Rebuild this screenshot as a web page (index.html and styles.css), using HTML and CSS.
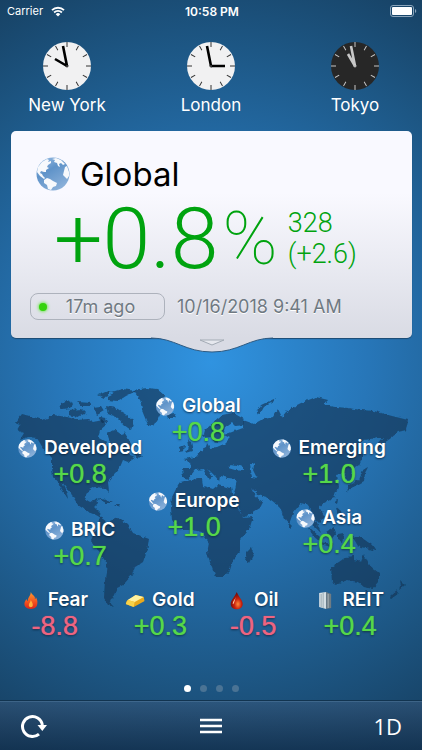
FILE: index.html
```html
<!DOCTYPE html>
<html lang="en">

<head>
    <meta charset="UTF-8">
    <meta name="viewport" content="width=device-width, initial-scale=1.0">
    <title>Global Markets</title>
    <link rel="stylesheet" href="styles.css">
</head>

<body>
    <!-- shared symbols -->
    <svg class="defs" width="0" height="0" aria-hidden="true">
        <defs>
            <linearGradient id="sea" x1="0" y1="0" x2="0.6" y2="1">
                <stop offset="0" stop-color="#a3c4e8" />
                <stop offset="0.45" stop-color="#5f93c9" />
                <stop offset="1" stop-color="#8ab0d9" />
            </linearGradient>
            <linearGradient id="flame" x1="0" y1="0" x2="0" y2="1">
                <stop offset="0" stop-color="#ff9a2e" />
                <stop offset="0.6" stop-color="#f4511e" />
                <stop offset="1" stop-color="#d9261c" />
            </linearGradient>
            <radialGradient id="oil" cx="0.6" cy="0.7" r="0.6">
                <stop offset="0" stop-color="#ff8a3a" />
                <stop offset="0.5" stop-color="#c9220f" />
                <stop offset="1" stop-color="#7c0d08" />
            </radialGradient>
        </defs>
        <symbol id="globe" viewBox="0 0 34 34">
            <circle cx="17" cy="17" r="16.5" fill="url(#sea)" />
            <path fill="#f7f9fc" d="M1 15 2 10 6 5 11 2 13 3 12 5 15 4 15 6 12 8 11 10 13 11 10 13 10 15 8 15 5 14 4 16 6 17 7 19 9 21 8 22 4 19Z" />
            <path fill="#f7f9fc" d="M8 23 11 21 14 22 17 24 21 26 20 29 17 30 15 33 12 32 11 28 8 26Z" />
            <path fill="#f7f9fc" d="M16 2 20 1 25 3 29 7 27 8 25 6 23 7 24 10 22 9 21 6 18 5 19 3Z" />
            <path fill="#f7f9fc" d="M29 10 31 9 33 15 33 19 31 22 29 20 27 18 28 14Z" />
        </symbol>
    </svg>

    <header class="status">
        <span class="carrier">Carrier
            <svg class="wifi" viewBox="0 0 14 11" aria-hidden="true">
                <path d="M1 4.2a8.6 8.6 0 0 1 12 0M3.1 6.5a5.6 5.6 0 0 1 7.8 0" fill="none" stroke="#fff" stroke-width="1.8" />
                <path d="M7 10.6 4.7 8.2a3.3 3.3 0 0 1 4.6 0Z" fill="#fff" />
            </svg>
        </span>
        <span class="time">10:58 PM</span>
        <svg class="battery" viewBox="0 0 27 12" aria-hidden="true">
            <rect x="0.5" y="0.5" width="23" height="11" rx="2.5" fill="none" stroke="#8ba5bb" />
            <rect x="2" y="2" width="20" height="8" rx="1" fill="#fff" />
            <path d="M25 4a2.2 2.2 0 0 1 0 4Z" fill="#8ba5bb" />
        </svg>
    </header>

    <section class="clocks">
        <div class="city">
            <svg class="clock" viewBox="-24 -24 48 48" aria-hidden="true">
                <circle r="24" fill="#f1f1f2" />
                <g class="ticks">
                    <path d="M0-24V-19M0 24V19M-24 0H-19M24 0H19" />
                    <path d="M0-24V-19M0 24V19M-24 0H-19M24 0H19" transform="rotate(30) scale(0.96)" />
                    <path d="M0-24V-19M0 24V19M-24 0H-19M24 0H19" transform="rotate(60) scale(0.96)" />
                </g>
                <path class="hands" d="M0 0-12-7M0 0-4-20" />
                <circle r="1" fill="#fff" stroke="#000" />
            </svg>
            <span>New York</span>
        </div>
        <div class="city">
            <svg class="clock" viewBox="-24 -24 48 48" aria-hidden="true">
                <circle r="24" fill="#f1f1f2" />
                <g class="ticks">
                    <path d="M0-24V-19M0 24V19M-24 0H-19M24 0H19" />
                    <path d="M0-24V-19M0 24V19M-24 0H-19M24 0H19" transform="rotate(30) scale(0.96)" />
                    <path d="M0-24V-19M0 24V19M-24 0H-19M24 0H19" transform="rotate(60) scale(0.96)" />
                </g>
                <path class="hands" d="M0 0H14M0 0-4-20" />
                <circle r="1" fill="#fff" stroke="#000" />
            </svg>
            <span>London</span>
        </div>
        <div class="city night">
            <svg class="clock" viewBox="-24 -24 48 48" aria-hidden="true">
                <circle r="24" fill="#272727" />
                <g class="ticks">
                    <path d="M0-24V-19M0 24V19M-24 0H-19M24 0H19" />
                    <path d="M0-24V-19M0 24V19M-24 0H-19M24 0H19" transform="rotate(30) scale(0.96)" />
                    <path d="M0-24V-19M0 24V19M-24 0H-19M24 0H19" transform="rotate(60) scale(0.96)" />
                </g>
                <path class="hands" d="M0 0-7-12M0 0-4-20" />
                <circle r="1" fill="#555" stroke="#ddd" />
            </svg>
            <span>Tokyo</span>
        </div>
    </section>

    <main>
        <section class="card">
            <h1><svg class="globe-big" aria-hidden="true"><use href="#globe" /></svg>Global</h1>
            <div class="quote">
                <span class="change">+0.8</span>
                <span class="percent">%</span>
                <span class="detail"><span>328</span><span>(+2.6)</span></span>
            </div>
            <div class="updated">
                <button type="button" class="ago"><i class="dot"></i><span>17m ago</span></button>
                <time datetime="2018-10-16T09:41">10/16/2018 9:41 AM</time>
            </div>
            <svg class="tab" viewBox="0 0 122 16" aria-hidden="true">
                <path d="M0 0V1C24 1 34 15 61 15S98 1 122 1V0Z" fill="#d9dbe4" />
                <path d="M0 1C24 1 34 15 61 15S98 1 122 1" fill="none" stroke="#2d5a82" />
                <path d="M49 3H73L61 8Z" fill="#e6e8ee" stroke="#a3abb5" />
            </svg>
        </section>

        <section class="map">
            <svg class="world" viewBox="0 352 422 270" aria-hidden="true">
                <filter id="coast" x="-5%" y="-5%" width="110%" height="110%">
                    <feTurbulence type="fractalNoise" baseFrequency="0.22" numOctaves="2" seed="4" />
                    <feDisplacementMap in="SourceGraphic" scale="4" xChannelSelector="R" yChannelSelector="G" />
                </filter>
                <g filter="url(#coast)" fill="#103050" fill-opacity="0.62" fill-rule="evenodd">
                    <!-- north america -->
                    <path d="M15 423 22 414 33 417 43 420 53 415 67 417 78 420 88 419 93 422 103 420 106 425 100 430 98 437 105 441 107 447 110 442 107 433 115 430 122 435 124 432 128 438 133 448 125 453 135 457 128 462 123 460 120 467 115 473 108 482 109 492 105 488 95 487 87 492 85 500 90 503 97 498 98 503 94 507 100 513 103 519 96 515 88 512 78 505 72 495 62 482 67 494 68 499 58 483 53 477 52 467 52 458 43 448 37 438 28 437 20 440 24 433 17 430 20 425Z" />
                    <path d="M60 405 67 400 74 403 70 408 62 409ZM68 410 82 409 86 413 78 417 68 415ZM78 401 90 402 92 406 80 406ZM93 407 101 406 104 411 97 415ZM98 395 108 391 114 393 104 398ZM108 393 122 389 136 391 126 396 118 401 108 400ZM106 406 116 408 126 414 134 421 131 430 124 425 118 418 108 414ZM98 417 106 418 108 422 102 423Z" />
                    <path d="M97 498 106 500 112 503 106 503ZM114 504 121 504 119 507ZM133 452 142 455 138 459Z" />
                    <!-- greenland, iceland, british isles -->
                    <path d="M133 390 147 388 158 389 165 395 163 402 162 410 158 418 153 426 148 425 143 413 140 400ZM166 414 176 413 174 418 168 418ZM187 440 191 442 193 451 186 453 188 447ZM180 447 185 445 184 451 179 452Z" />
                    <!-- south america -->
                    <path d="M100 517 107 522 118 518 128 525 133 533 149 539 147 550 143 562 135 567 132 575 123 585 117 588 113 597 110 603 114 607 108 605 104 598 105 580 107 563 97 550 91 540 97 528Z" />
                    <!-- scandinavia -->
                    <path d="M203 438 205 430 213 423 223 415 233 413 244 419 243 425 236 426 232 422 225 427 222 437 215 443 211 437Z" />
                    <!-- europe and asia, with the black sea and the caspian cut out -->
                    <path d="M182 468 191 468 190 462 184 459 195 457 200 451 206 448 207 443 210 448 217 447 224 444 230 438 224 435 232 432 243 428 243 420 254 424 261 420 273 417 278 409 282 417 286 412 293 407 301 403 316 397 328 400 324 405 336 407 348 408 361 410 374 411 388 415 408 420 406 430 398 432 391 438 384 443 378 452 377 445 383 438 378 438 364 440 358 445 363 455 359 465 351 470 353 478 348 482 344 473 336 475 338 487 334 498 324 503 319 507 325 517 319 523 315 519 321 533 314 526 311 513 308 505 301 503 293 513 289 524 284 518 280 508 275 503 267 497 258 495 252 488 257 498 263 502 260 508 243 518 238 506 233 495 235 490 237 479 228 478 221 476 220 482 214 475 207 468 213 477 209 480 203 469 195 470 188 479 183 477ZM228 468 230 464 237 465 243 467 243 471 235 470ZM250 465 255 463 253 470 257 478 252 477Z" />
                    <!-- africa, madagascar, sri lanka -->
                    <path d="M180 482 197 479 202 479 203 486 213 489 218 485 231 488 233 497 238 508 243 518 253 517 250 527 240 540 240 552 233 560 230 570 223 577 216 577 212 567 207 553 209 543 202 532 192 530 182 530 172 520 171 508 172 497 178 485ZM252 547 254 553 249 563 245 561 247 552ZM289 523 292 526 289 529Z" />
                    <!-- indonesia, philippines, japan -->
                    <path d="M309 527 320 537 319 541 312 535ZM319 542 334 544 332 547 320 544ZM326 532 334 527 336 533 331 540ZM338 534 344 533 342 542 338 540ZM352 536 362 538 372 545 376 551 366 548 358 546ZM336 507 341 511 343 520 338 516ZM363 470 368 467 365 473 364 481 355 486 346 492 349 485 359 480ZM334 502 338 498 337 504Z" />
                    <!-- australia, new zealand -->
                    <path d="M331 567 339 562 346 557 354 556 354 560 361 562 364 554 369 565 379 573 379 582 373 589 364 587 358 582 348 580 336 584 332 582ZM365 591 371 591 368 595ZM400 580 405 585 399 590 401 585ZM397 590 399 593 391 599 390 596Z" />
                    <path d="M256 413 261 405 276 398 273 402 264 407 260 414Z" />
                </g>
            </svg>

            <a href="#global" class="pin global up">
                <span class="name"><svg aria-hidden="true"><use href="#globe" /></svg>Global</span>
                <span class="value">+0.8</span>
            </a>
            <a href="#developed" class="pin developed up">
                <span class="name"><svg aria-hidden="true"><use href="#globe" /></svg>Developed</span>
                <span class="value">+0.8</span>
            </a>
            <a href="#emerging" class="pin emerging up">
                <span class="name"><svg aria-hidden="true"><use href="#globe" /></svg>Emerging</span>
                <span class="value">+1.0</span>
            </a>
            <a href="#europe" class="pin europe up">
                <span class="name"><svg aria-hidden="true"><use href="#globe" /></svg>Europe</span>
                <span class="value">+1.0</span>
            </a>
            <a href="#bric" class="pin bric up">
                <span class="name"><svg aria-hidden="true"><use href="#globe" /></svg>BRIC</span>
                <span class="value">+0.7</span>
            </a>
            <a href="#asia" class="pin asia up">
                <span class="name"><svg aria-hidden="true"><use href="#globe" /></svg>Asia</span>
                <span class="value">+0.4</span>
            </a>
            <a href="#fear" class="pin fear down">
                <span class="name">
                    <svg viewBox="0 0 19 19" aria-hidden="true">
                        <path d="M9 1C10 4 14 5 13 8 14 8 14 7 14 6 16 9 16 12 15 15 13 19 5 19 3 15 2 12 3 10 5 8 5 10 6 10 6 10 6 6 9 5 9 1Z" fill="url(#flame)" />
                        <path d="M9 9C10 11 11 12 11 14 11 17 7 17 7 14 7 12 9 11 9 9Z" fill="#ffb03a" />
                    </svg>Fear</span>
                <span class="value">-8.8</span>
            </a>
            <a href="#gold" class="pin gold up">
                <span class="name">
                    <svg viewBox="0 0 19 19" aria-hidden="true">
                        <path d="M1 10 10 4 18 6 19 10 8 16 0 13Z" fill="#e9a91c" />
                        <path d="M2 9 10 4 18 6 9 11Z" fill="#fff2a0" />
                        <path d="M2 9 9 11 8 16 0 13Z" fill="#f8d34b" />
                    </svg>Gold</span>
                <span class="value">+0.3</span>
            </a>
            <a href="#oil" class="pin crude down">
                <span class="name">
                    <svg viewBox="0 0 19 19" aria-hidden="true">
                        <path d="M9 1C11 6 15 9 15 13 15 20 3 20 3 13 3 9 7 6 9 1Z" fill="url(#oil)" />
                        <path d="M8 6C7 9 5 10 5 13 6 14 7 10 8 6Z" fill="#ffc9a8" />
                    </svg>Oil</span>
                <span class="value">-0.5</span>
            </a>
            <a href="#reit" class="pin reit up">
                <span class="name">
                    <svg viewBox="0 0 19 19" aria-hidden="true">
                        <path d="M3 2 10 1 10 18 3 16Z" fill="#d5dfe4" />
                        <path d="M10 1 15 3 15 17 10 18Z" fill="#6f7c84" />
                        <path d="M5 3V16M7 2V17" stroke="#9aabb4" />
                        <path d="M12 3V17" stroke="#a9b4ba" />
                    </svg>REIT</span>
                <span class="value">+0.4</span>
            </a>
        </section>

        <div class="pages">
            <i class="active"></i><i></i><i></i><i></i>
        </div>
    </main>

    <footer class="toolbar">
        <button type="button" aria-label="Refresh">
            <svg width="28" height="26" viewBox="0 0 28 26" aria-hidden="true">
                <path d="M19 21.1A10 10 0 1 1 22.4 12" fill="none" stroke="#fff" stroke-width="3" />
                <path d="M17.5 12H27L22.3 18Z" fill="#fff" />
            </svg>
        </button>
        <button type="button" aria-label="Menu">
            <svg width="22" height="16" viewBox="0 0 22 16" aria-hidden="true">
                <path d="M0 2H22M0 8H22M0 14H22" stroke="#fff" stroke-width="2.4" />
            </svg>
        </button>
        <button type="button" class="range">1D</button>
    </footer>
</body>

</html>
```
FILE: styles.css
```css
* {
    box-sizing: border-box;
    margin: 0;
    padding: 0;
}

body {
    display: flex;
    flex-direction: column;
    min-height: 100vh;
    font-family: Inter, "Liberation Sans", sans-serif;
    color: white;
    background: radial-gradient(circle 450px at 50% 362px, #3093e0 0, #2776b8 35%, #1d5785 70%, #153b5a 100%);
}

button {
    border: none;
    background: none;
    color: inherit;
    font-family: inherit;
}

a {
    color: inherit;
    text-decoration: none;
}

.defs {
    position: absolute;
}

.status {
    display: grid;
    grid-template-columns: 1fr auto 1fr;
    align-items: center;
    height: 22px;
    padding: 0 5px 0 7px;
    font-size: 11px;
}

.carrier {
    display: flex;
    align-items: center;
    gap: 8px;
}

.wifi {
    width: 14px;
    height: 11px;
}

.time {
    font-weight: 600;
    font-size: 12px;
}

.battery {
    width: 27px;
    height: 12px;
    justify-self: end;
}

.clocks {
    display: flex;
    justify-content: space-between;
    padding: 20px 28px 12px;
}

.city {
    display: flex;
    flex-direction: column;
    align-items: center;
    gap: 2px;
    width: 78px;
    font-size: 17px;
    line-height: 27px;
    white-space: nowrap;
}

.clock {
    width: 48px;
    height: 48px;
}

.ticks {
    stroke: #333;
    stroke-width: 1;
}

.hands {
    fill: none;
    stroke: #000;
    stroke-width: 2.6;
}

.night .ticks,
.night .hands {
    stroke: #c8c8c8;
}

main {
    flex: 1;
}

.card {
    position: relative;
    margin: 0 10px 0 11px;
    padding: 24px 19px 18px;
    border-radius: 5px;
    color: #00a30f;
    background: linear-gradient(#f9f9ff 0, #f9f9ff 30%, #d9dbe4 100%);
    box-shadow: 0 1px 1px #1d4a70;
}

h1 {
    display: flex;
    align-items: center;
    gap: 10px;
    padding-left: 6px;
    color: black;
    font-size: 33px;
    line-height: 38px;
    font-weight: 400;
}

.globe-big {
    width: 34px;
    height: 34px;
}

.quote {
    display: flex;
    align-items: center;
    height: 92px;
    margin-bottom: 8px;
    padding-left: 24px;
    font-family: Roboto, "Liberation Sans", sans-serif;
    font-weight: 300;
}

.change {
    font-size: 86px;
    line-height: 86px;
}

.percent {
    margin-left: 4px;
    font-size: 74px;
    line-height: 86px;
    font-weight: 100;
}

.detail {
    display: flex;
    flex-direction: column;
    margin-left: 10px;
    font-size: 27px;
    line-height: 31px;
}

.updated {
    display: flex;
    align-items: center;
    gap: 12px;
    color: #6f7982;
    font-size: 18px;
    white-space: nowrap;
    text-shadow: 0 1px 0 white;
}

.ago {
    display: flex;
    align-items: center;
    width: 135px;
    height: 27px;
    padding: 0 10px 0 8px;
    border: 1px solid #adb2bc;
    border-radius: 8px;
    font-size: 18px;
    text-shadow: inherit;
}

.ago span {
    flex: 1;
    text-align: center;
}

.dot {
    width: 8px;
    height: 8px;
    border-radius: 50%;
    background-color: #35d30c;
    box-shadow: 0 0 3px 1px #7ce85f;
}

.tab {
    position: absolute;
    top: 100%;
    left: 50%;
    width: 122px;
    height: 16px;
    margin: -1px 0 0 -61px;
}

.map {
    position: relative;
    padding: 14px 0 51px;
}

.world {
    display: block;
    width: 100%;
}

/* pins are centred on their point of the map */
.pin {
    position: absolute;
    display: flex;
    flex-direction: column;
    align-items: center;
    transform: translateX(-50%);
    text-shadow: 0 1px 2px rgba(0, 20, 40, 0.7);
}

.name {
    display: flex;
    align-items: center;
    gap: 7px;
    font-size: 19px;
    line-height: 24px;
    font-weight: 600;
}

.name svg {
    width: 19px;
    height: 19px;
}

.value {
    font-family: "Liberation Sans", sans-serif;
    font-size: 27px;
    line-height: 28px;
    text-shadow: 0 0 1px currentColor, 0 1px 2px rgba(0, 20, 40, 0.7);
}

.up .value {
    color: #55d84a;
}

.down .value {
    color: #ee6480;
}

.global {
    left: 47%;
    top: 56px;
}

.developed {
    left: 19%;
    top: 98px;
}

.emerging {
    left: 78%;
    top: 98px;
}

.europe {
    left: 46%;
    top: 151px;
}

.bric {
    left: 19%;
    top: 180px;
}

.asia {
    left: 78%;
    top: 168px;
}

.fear {
    left: 13%;
    top: 250px;
}

.gold {
    left: 38%;
    top: 250px;
}

.crude {
    left: 60%;
    top: 250px;
}

.reit {
    left: 83%;
    top: 250px;
}

.pages {
    display: flex;
    justify-content: center;
    gap: 9px;
    padding: 12px 0 8px;
}

.pages i {
    width: 7px;
    height: 7px;
    border-radius: 50%;
    background-color: #4a7394;
}

.pages .active {
    background-color: white;
}

.toolbar {
    display: flex;
    justify-content: space-between;
    align-items: center;
    height: 51px;
    padding: 0 20px;
    border-top: 1px solid #123450;
    background: linear-gradient(rgba(60, 90, 125, 0.5), rgba(18, 48, 78, 0.8));
    box-shadow: inset 0 1px 0 rgba(120, 160, 190, 0.25);
}

.toolbar button {
    display: flex;
}

.toolbar .range {
    font-family: "Open Sans", "Liberation Sans", sans-serif;
    font-size: 22px;
}
```
